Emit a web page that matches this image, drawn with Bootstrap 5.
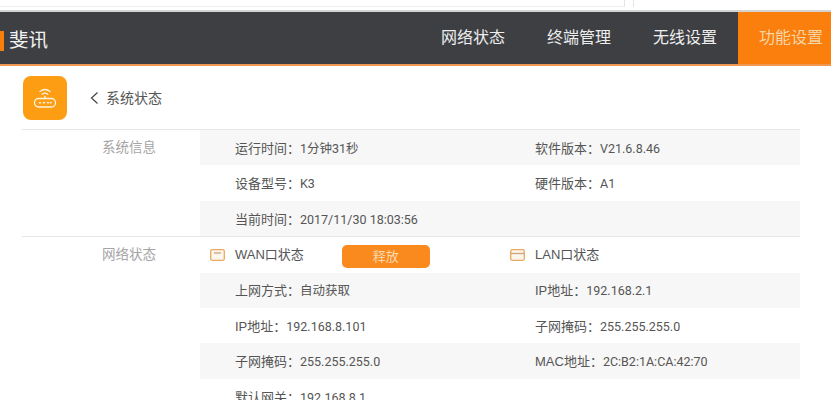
<!DOCTYPE html>
<html lang="zh"><head><meta charset="utf-8"><title>系统状态</title>
<link rel="stylesheet" href="https://cdn.jsdelivr.net/npm/bootstrap@5.3.0/dist/css/bootstrap.min.css">
<style>
html,body{height:400px;overflow:hidden;background:#fff}
body{font-family:"Liberation Sans","Noto Sans CJK SC",sans-serif;font-size:13px;color:#555}
.chrome-strip{height:12px;background:#fff;border-bottom:2px solid #d4d4d4}
.chrome-a{width:625px;border-right:1px solid #e4e4e4;border-bottom:1px solid #eee;height:7px}
.chrome-b{width:160px;margin-left:8px;border-left:1px solid #e4e4e4;height:7px}
.top-bar{height:54px;background:#3d3f43;border-bottom:2px solid #f0974f}
.logo-box{padding-top:5px}
.logo-mark{width:4px;height:20px;background:#f57f0a}
.logo-text{font-size:19.5px;color:#f2f2f2;margin-left:5px}
.menu-item{font-size:16px;color:#eee;height:52px;width:106px}
.menu-item:hover{color:#eee}
.menu-active{background:#fb7f0d;color:#f5d6a8;width:93px;padding-left:21px}
.menu-active:hover{color:#f5d6a8}
.page-head{height:63px;padding-left:23px}
.app-icon{width:44px;height:44px;background:#fd9d14;border-radius:8px}
.crumb{margin-left:23px;font-size:14px;color:#555;padding-top:2px}
.crumb svg{margin-right:7px;margin-bottom:2px}
.main-wrap{margin-left:22px;margin-right:31px}
.sec{border-top:1px solid #e6e6e6}
.sec-label{width:178px;font-size:13.5px;color:#a5a5a5;text-align:right;padding:8px 44px 0 0;flex:none}
.info-row{height:35.4px;padding-left:35px;padding-top:2px}
.row-grey{background:#f7f7f7}
.col-a{width:300px;flex:none}
.col-b{flex:1}
.val{font-family:Roboto,"Liberation Sans","Noto Sans CJK SC",sans-serif;font-size:12.5px}
.head-row{padding-left:0;padding-top:0}
.head-a{width:310px;flex:none;padding-left:10px}
.port-ico{margin-right:10px;flex:none}
.free-btn{width:88px;height:23px;background:#fb8a1e;color:#f7d9b0;font-size:13px;line-height:23px;border-radius:5px;margin-left:38px;margin-top:4px;padding:0;border:0}
.free-btn:hover{background:#fb8a1e;color:#f7d9b0}
</style></head><body>
<div class="chrome-strip d-flex"><div class="chrome-a"></div><div class="chrome-b"></div></div>
<div class="top-bar d-flex align-items-center justify-content-between">
  <div class="logo-box d-flex align-items-center"><span class="logo-mark"></span><span class="logo-text">斐讯</span></div>
  <nav class="d-flex">
    <a class="menu-item d-flex align-items-center justify-content-center text-decoration-none" href="#">网络状态</a>
    <a class="menu-item d-flex align-items-center justify-content-center text-decoration-none" href="#">终端管理</a>
    <a class="menu-item d-flex align-items-center justify-content-center text-decoration-none" href="#">无线设置</a>
    <a class="menu-item menu-active d-flex align-items-center text-decoration-none" href="#">功能设置</a>
  </nav>
</div>
<div class="page-head d-flex align-items-center">
  <div class="app-icon d-flex align-items-center justify-content-center">
    <svg width="24" height="22" viewBox="0 0 24 22" fill="none" stroke="#fff4dd" stroke-width="1.300" stroke-linecap="round"><path d="M7 4.500 Q12 .5 17 4.500"/><path d="M9.300 7.300 Q12 5 14.700 7.300"/><path d="M12 9.500V11.500"/><rect x="1.500" y="11.500" width="21" height="8.500" rx="4"/><path d="M6.500 15.700h1M10.500 15.700h1M14.500 15.700h1M17.500 15.700h.5" stroke-width="1.600"/></svg>
  </div>
  <div class="crumb d-flex align-items-center">
    <svg width="9" height="14" viewBox="0 0 9 14" fill="none" stroke="#444" stroke-width="1.200"><path d="M7.500 1.500 1.500 7l6 5.500"/></svg>系统状态
  </div>
</div>
<div class="main-wrap">
  <section class="sec d-flex">
    <div class="sec-label">系统信息</div>
    <div class="flex-grow-1">
      <div class="info-row row-grey d-flex align-items-center"><div class="col-a">运行时间：<span class="val">1分钟31秒</span></div><div class="col-b">软件版本：<span class="val">V21.6.8.46</span></div></div>
      <div class="info-row d-flex align-items-center"><div class="col-a">设备型号：<span class="val">K3</span></div><div class="col-b">硬件版本：<span class="val">A1</span></div></div>
      <div class="info-row row-grey d-flex align-items-center"><div class="col-a">当前时间：<span class="val">2017/11/30 18:03:56</span></div></div>
    </div>
  </section>
  <section class="sec d-flex">
    <div class="sec-label">网络状态</div>
    <div class="flex-grow-1">
      <div class="info-row head-row d-flex align-items-center">
        <div class="head-a d-flex align-items-center">
          <svg class="port-ico" width="15" height="12" viewBox="0 0 15 12" fill="#fdf6ec" stroke="#e9a860" stroke-width="1.300"><rect x=".7" y=".7" width="13.600" height="10.600" rx="1.500"/><path d="M4 4h7" stroke="#c9a47c"/></svg>WAN口状态
          <button class="btn free-btn" type="button">释放</button>
        </div>
        <div class="d-flex align-items-center">
          <svg class="port-ico" width="15" height="12" viewBox="0 0 15 12" fill="#fdf6ec" stroke="#e9a860" stroke-width="1.300"><rect x=".7" y=".7" width="13.600" height="10.600" rx="1.500"/><path d="M1 4.500h13" stroke="#c9a47c"/></svg>LAN口状态
        </div>
      </div>
      <div class="info-row row-grey d-flex align-items-center"><div class="col-a">上网方式：<span class="val">自动获取</span></div><div class="col-b">IP地址：<span class="val">192.168.2.1</span></div></div>
      <div class="info-row d-flex align-items-center"><div class="col-a">IP地址：<span class="val">192.168.8.101</span></div><div class="col-b">子网掩码：<span class="val">255.255.255.0</span></div></div>
      <div class="info-row row-grey d-flex align-items-center"><div class="col-a">子网掩码：<span class="val">255.255.255.0</span></div><div class="col-b">MAC地址：<span class="val">2C:B2:1A:CA:42:70</span></div></div>
      <div class="info-row d-flex align-items-center"><div class="col-a">默认网关：<span class="val">192.168.8.1</span></div></div>
    </div>
  </section>
</div>
</body></html>
